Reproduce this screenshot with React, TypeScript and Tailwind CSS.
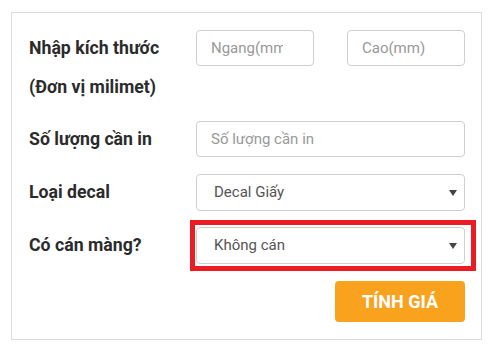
const font = { fontFamily: "Roboto, 'Noto Sans', sans-serif" };

/* dropdown arrow, a small filled triangle */
function Caret() {
  return (
    <svg
      width="8"
      height="6"
      viewBox="0 0 8 6"
      className="pointer-events-none absolute right-[8px] top-1/2 -translate-y-1/2"
    >
      <polygon points="0,0 8,0 4,6" fill="#444" />
    </svg>
  );
}

function Select({ value, options }: { value: string; options: string[] }) {
  return (
    <div className="relative h-[37px] w-full">
      <select
        defaultValue={value}
        className="h-full w-full appearance-none rounded-[4px] border border-[#cfcfcf] bg-white pl-[17px] text-[15px] text-[#555] outline-none"
        style={font}
      >
        {options.map((o) => (
          <option key={o}>{o}</option>
        ))}
      </select>
      <Caret />
    </div>
  );
}

const inputCls =
  "h-[36px] rounded-[4px] border border-[#cfcfcf] bg-white pl-[14px] text-[15px] text-[#555] outline-none placeholder:text-[#999]";

const labelCls = "w-[167px] shrink-0 text-[17.7px] font-bold text-[#2b2b2b]";

export default function App() {
  return (
    <div className="h-[349px] w-[495px] bg-white pl-[11px] pt-[12px]" style={font}>
      <div className="h-[328px] w-[471px] border border-[#dcdcdc] pl-[17px] pr-[16px] pt-[16px]">
        {/* size row */}
        <div className="flex items-start">
          <div className={`${labelCls} leading-[39px]`}>
            Nhập kích thước
            <br />
            (Đơn vị milimet)
          </div>
          <div className="mt-[1px] flex w-[269px] justify-between">
            <input className={`${inputCls} w-[118px] pr-[30px]`} placeholder="Ngang(mm)" style={font} />
            <input className={`${inputCls} w-[118px] pr-[14px]`} placeholder="Cao(mm)" style={font} />
          </div>
        </div>

        {/* quantity */}
        <div className="mt-[14px] flex items-center">
          <div className={labelCls}>Số lượng cần in</div>
          <input className={`${inputCls} w-[269px] pr-[14px]`} placeholder="Số lượng cần in" style={font} />
        </div>

        {/* decal type */}
        <div className="mt-[17px] flex items-center">
          <div className={labelCls}>Loại decal</div>
          <div className="w-[269px]">
            <Select value="Decal Giấy" options={["Decal Giấy", "Decal Nhựa", "Decal Trong"]} />
          </div>
        </div>

        {/* lamination */}
        <div className="mt-[16px] flex items-center">
          <div className={labelCls}>Có cán màng?</div>
          <div className="relative w-[269px]">
            <Select value="Không cán" options={["Không cán", "Cán bóng", "Cán mờ"]} />
            <div className="pointer-events-none absolute bottom-[-7px] left-[-6px] right-[-11px] top-[-7px] border-[5px] border-[#ec1c24]" />
          </div>
        </div>

        <div className="mt-[17px] flex justify-end">
          <button className="h-[41px] w-[130px] rounded-[4px] bg-[#f8a21e] text-[18px] font-bold text-white">
            TÍNH GIÁ
          </button>
        </div>
      </div>
    </div>
  );
}
